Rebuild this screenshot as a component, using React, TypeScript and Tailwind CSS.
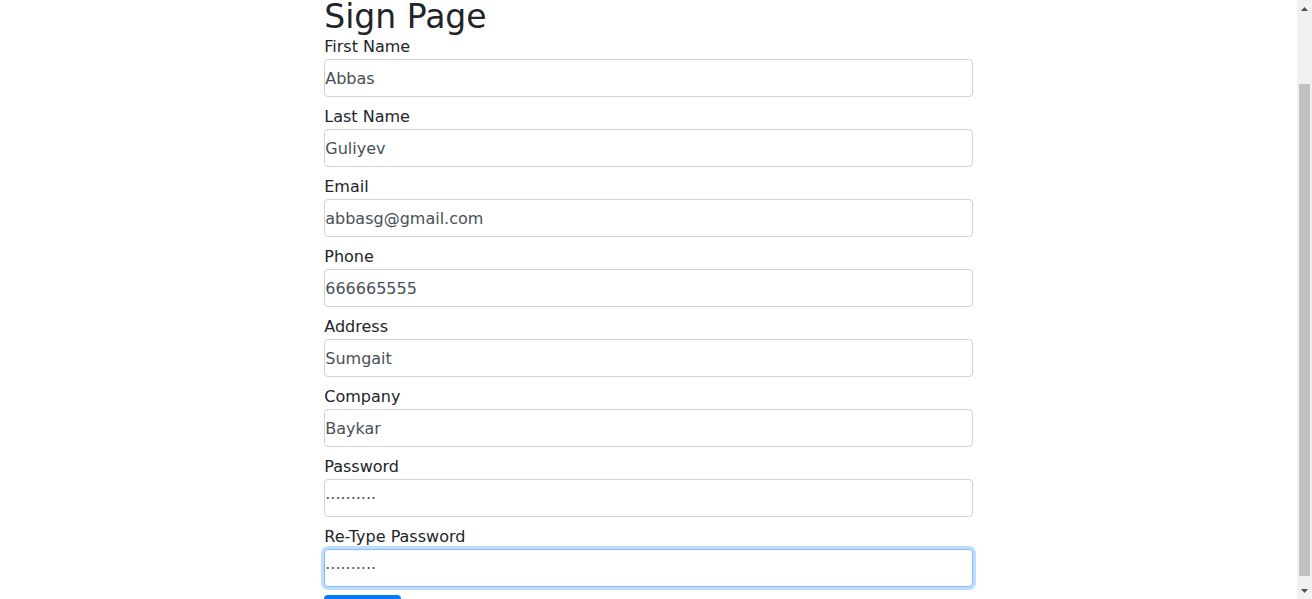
const fields = [
  { id: "firstName", label: "First Name", value: "Abbas", type: "text" },
  { id: "lastName", label: "Last Name", value: "Guliyev", type: "text" },
  { id: "email", label: "Email", value: "abbasg@gmail.com", type: "email" },
  { id: "phone", label: "Phone", value: "666665555", type: "text" },
  { id: "address", label: "Address", value: "Sumgait", type: "text" },
  { id: "company", label: "Company", value: "Baykar", type: "text" },
  { id: "password", label: "Password", value: "··········", type: "text" },
  { id: "rePassword", label: "Re-Type Password", value: "··········", type: "text" },
];

function Scrollbar() {
  return (
    <div className="flex h-full w-[15px] shrink-0 flex-col bg-[#f1f1f1]">
      <div className="flex h-[17px] items-center justify-center">
        <svg width="7" height="4" viewBox="0 0 7 4">
          <path d="M3.5 0L7 4H0z" fill="#505050" />
        </svg>
      </div>
      <div className="flex flex-1 flex-col px-[2px] pt-[67px] pb-[6px]">
        <div className="flex-1 bg-[#c1c1c1]" />
      </div>
      <div className="flex h-[17px] items-center justify-center">
        <svg width="7" height="4" viewBox="0 0 7 4">
          <path d="M0 0H7L3.5 4z" fill="#505050" />
        </svg>
      </div>
    </div>
  );
}

export default function App() {
  return (
    <div className="flex h-[599px] overflow-hidden bg-white font-['DejaVu_Sans',sans-serif] text-[#212529]">
      <div className="min-w-0 flex-1">
        <form className="mx-auto w-1/2">
          <h1 className="h-[35px] text-[33px] leading-[34px] font-normal">Sign Page</h1>
          {fields.map((f) => (
            <div className="mb-2 flex flex-col" key={f.id}>
              <label className="text-base leading-6" htmlFor={f.id}>
                {f.label}
              </label>
              <input
                className={
                  f.id === "rePassword"
                    ? "h-[38px] rounded border border-[#80bdff] bg-white px-0 text-base text-[#495057] shadow-[0_0_0_3px_rgba(0,123,255,0.25)] outline-none"
                    : "h-[38px] rounded border border-[#ced4da] bg-white px-0 text-base text-[#495057] outline-none"
                }
                defaultValue={f.value}
                id={f.id}
                name={f.id}
                type={f.type}
              />
            </div>
          ))}
          <button
            className="h-[38px] w-[77px] rounded bg-[#007bff] text-base text-white"
            type="submit"
          >
            Submit
          </button>
        </form>
      </div>
      <Scrollbar />
    </div>
  );
}
